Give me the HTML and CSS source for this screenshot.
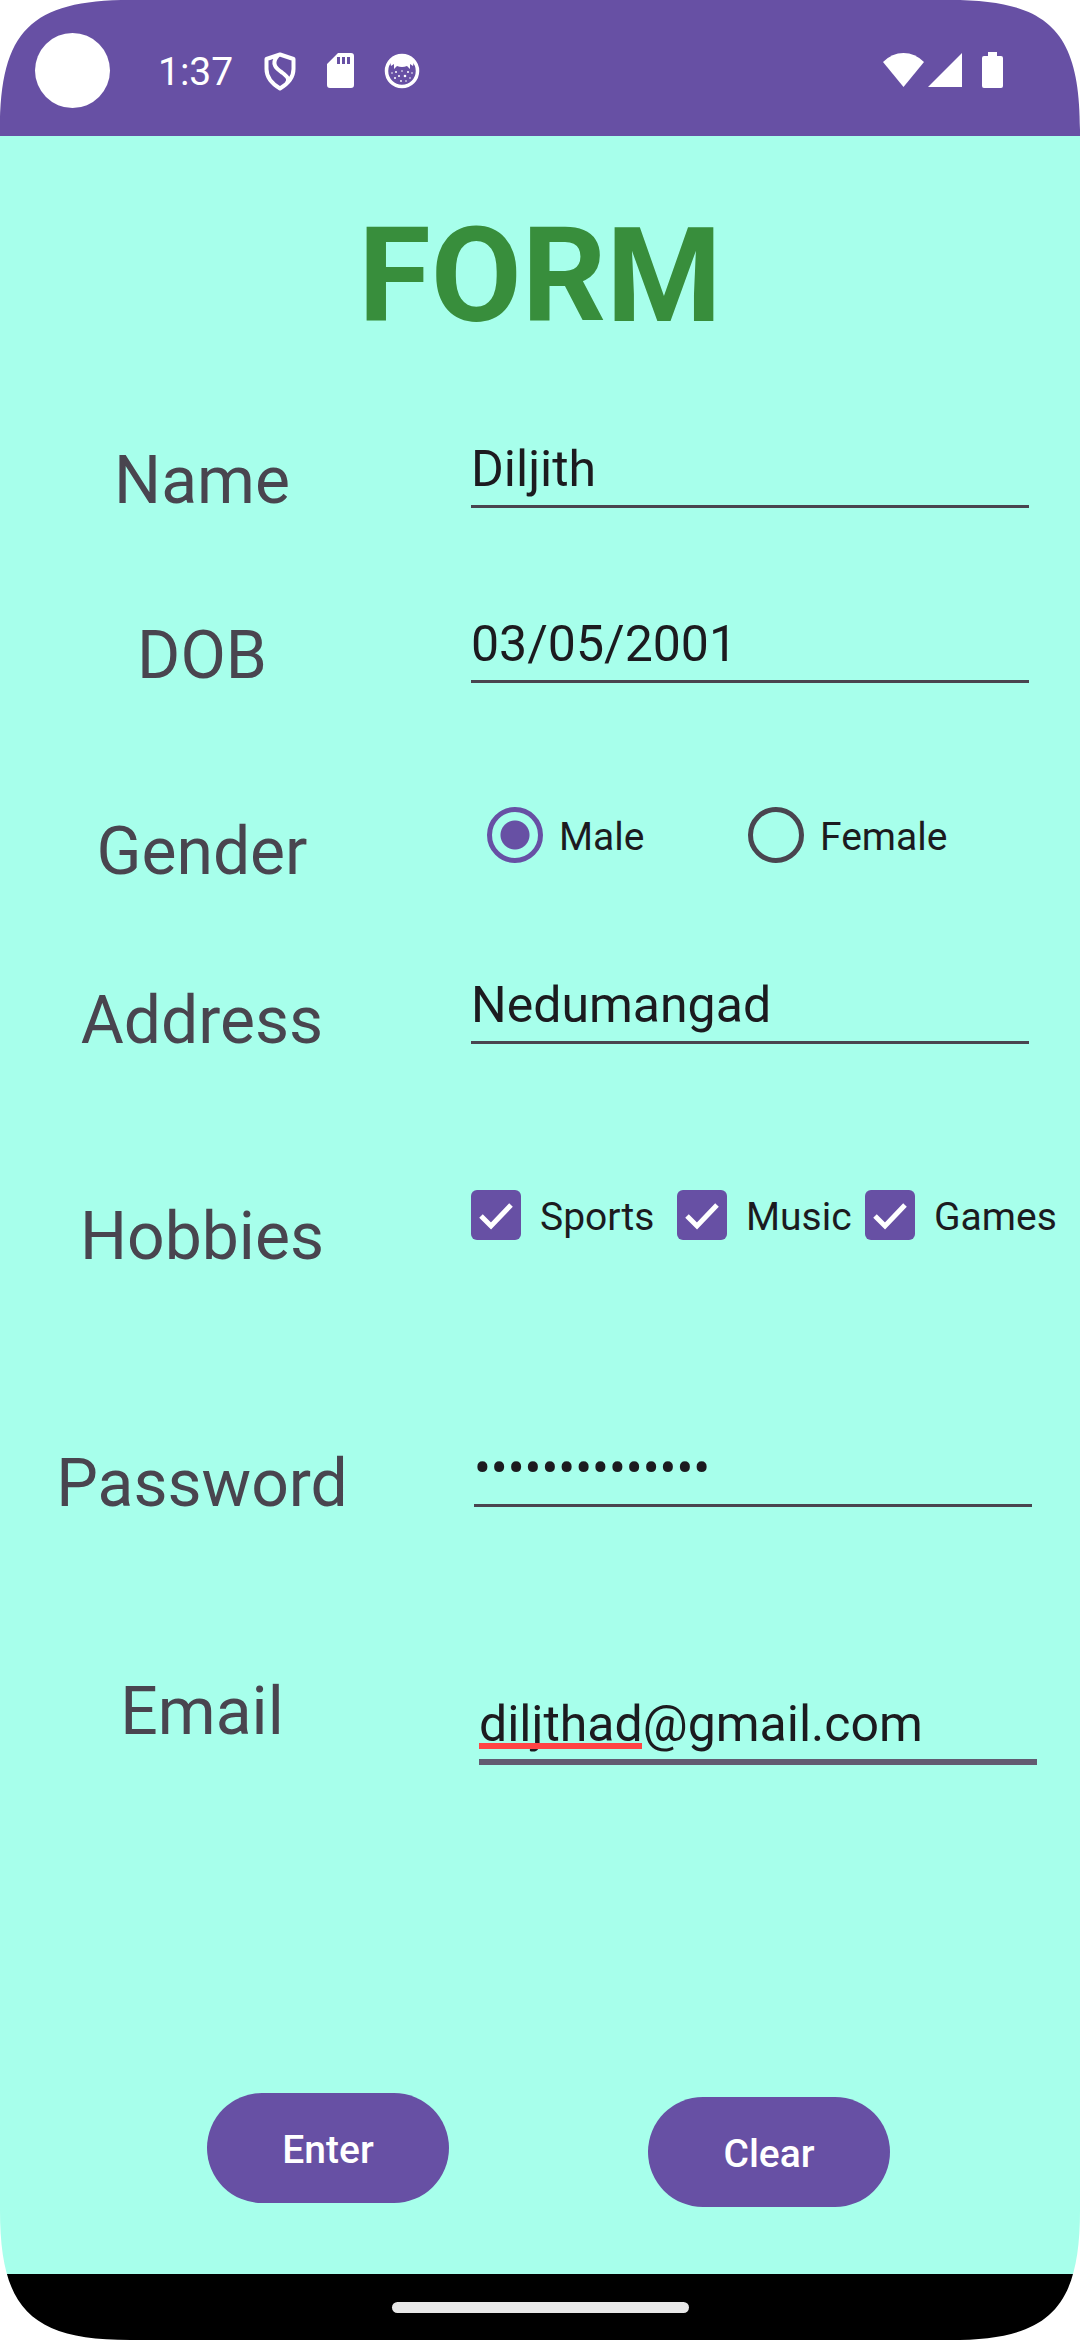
FILE: index.html
```html
<!DOCTYPE html>
<html lang="en">
<head>
<meta charset="utf-8">
<meta name="viewport" content="width=device-width, initial-scale=1">
<title>Form</title>
<link rel="stylesheet" href="styles.css">
</head>
<body>
<div class="screen">
  <header class="status-bar">
    <span class="camera"></span>
    <span class="clock">1:37</span>
    <div class="notifications">
      <svg class="icon" viewBox="0 0 40 40" aria-hidden="true"><path d="M20 3.500L33.500 8V18C33.500 26.500 27.500 33 20 37.500C12.500 33 6.500 26.500 6.500 18V8ZM18 4.500C10 13 17 18 22 21.500C28 26 30 29 26.500 32" fill="none" stroke="#fff" stroke-width="4" stroke-linejoin="round"/></svg>
      <svg class="icon" viewBox="0 0 40 40" aria-hidden="true"><path fill="#fff" fill-rule="evenodd" d="M17 2H30Q33 2 33 5V34Q33 37 30 37H9Q6 37 6 34V13ZM16 6V13H19V6ZM21 6V13H24V6ZM26 6V13H29V6Z"/></svg>
      <svg class="icon" viewBox="0 0 40 40" aria-hidden="true"><circle cx="20" cy="20" r="15.500" fill="none" stroke="#fff" stroke-width="3.500"/><path fill="#fff" d="M8 10Q20 -1 32 10L31 15L28 13L28 18L25 15Q20 17 15 15L12 18L12 13L9 15Z"/><g fill="#fff"><circle cx="14" cy="21" r="1"/><circle cx="20" cy="20" r="0.800"/><circle cx="26" cy="21" r="1"/><circle cx="10" cy="22" r="0.800"/><circle cx="30" cy="22" r="0.800"/><circle cx="17" cy="25" r="1"/><circle cx="23" cy="25" r="1.300"/><circle cx="13" cy="27" r="1"/><circle cx="28" cy="27" r="0.800"/><circle cx="19" cy="30" r="0.900"/><circle cx="24" cy="30" r="0.800"/></g></svg>
    </div>
    <div class="system">
      <svg class="wifi" viewBox="0 0 41 36" aria-hidden="true"><path fill="#fff" d="M0 10Q9 1 20.500 1T41 10L20.500 35Z"/></svg>
      <svg class="signal" viewBox="0 0 34 36" aria-hidden="true"><path fill="#fff" d="M34 1V35H0Z"/></svg>
      <svg class="battery" viewBox="0 0 21 36" aria-hidden="true"><path fill="#fff" d="M6 0H15V4H19Q21 4 21 6V34Q21 36 19 36H2Q0 36 0 34V6Q0 4 2 4H6Z"/></svg>
    </div>
  </header>

  <main class="content">
    <h1 class="title">FORM</h1>
    <form class="form">
      <div class="row">
        <label class="label" for="name">Name</label>
        <input class="input" id="name" type="text" value="Diljith">
      </div>
      <div class="row row-dob">
        <label class="label" for="dob">DOB</label>
        <input class="input" id="dob" type="text" value="03/05/2001">
      </div>
      <div class="row row-gender" role="radiogroup" aria-labelledby="gender">
        <span class="label" id="gender">Gender</span>
        <div class="radios">
          <label class="option"><input class="radio" type="radio" name="gender" checked><span class="option-text">Male</span></label>
          <label class="option"><input class="radio" type="radio" name="gender"><span class="option-text">Female</span></label>
        </div>
      </div>
      <div class="row row-low row-address">
        <label class="label" for="address">Address</label>
        <input class="input" id="address" type="text" value="Nedumangad">
      </div>
      <div class="row row-hobbies" role="group" aria-labelledby="hobbies">
        <span class="label" id="hobbies">Hobbies</span>
        <div class="checks">
          <label class="option"><input class="check" type="checkbox" checked><span class="option-text">Sports</span></label>
          <label class="option"><input class="check" type="checkbox" checked><span class="option-text">Music</span></label>
          <label class="option"><input class="check" type="checkbox" checked><span class="option-text">Games</span></label>
        </div>
      </div>
      <div class="row row-low row-password">
        <label class="label" for="password">Password</label>
        <input class="input" id="password" type="password" value="abcdefghijklmn">
      </div>
      <div class="row row-low row-email">
        <label class="label" for="email">Email</label>
        <div class="spellchecked">
          <input class="input input-focused" id="email" type="text" inputmode="email" spellcheck="false" value="diljthad@gmail.com">
          <span class="typo"></span>
        </div>
      </div>
      <div class="actions">
        <button class="button" type="button">Enter</button>
        <button class="button button-clear" type="reset">Clear</button>
      </div>
    </form>
  </main>

  <footer class="nav-bar"><span class="handle"></span></footer>

  <svg class="corner corner-tl" viewBox="0 0 130 130" aria-hidden="true"><path d="M0 0H130C31 0 0 31 0 130Z"/></svg>
  <svg class="corner corner-tr" viewBox="0 0 130 130" aria-hidden="true"><path d="M0 0H130C31 0 0 31 0 130Z"/></svg>
  <svg class="corner corner-bl" viewBox="0 0 130 130" aria-hidden="true"><path d="M0 0H130C31 0 0 31 0 130Z"/></svg>
  <svg class="corner corner-br" viewBox="0 0 130 130" aria-hidden="true"><path d="M0 0H130C31 0 0 31 0 130Z"/></svg>
</div>
</body>
</html>
```
FILE: styles.css
```css
:root {
  --primary: #6750a4;
  --surface: #a7ffeb;
  --text: #1c1b1f;
  --muted: #49454f;
}

* {
  box-sizing: border-box;
}

body {
  margin: 0;
  background: #fff;
  color: var(--text);
  font-family: Roboto, "Liberation Sans", sans-serif;
}

.screen {
  position: relative;
  display: flex;
  flex-direction: column;
  min-height: 100vh;
}

/* Status bar */
.status-bar {
  display: flex;
  align-items: center;
  height: 136px;
  padding: 4px 77px 0 35px;
  background: var(--primary);
  color: #fff;
}

.camera {
  width: 75px;
  height: 75px;
  border-radius: 50%;
  background: #fff;
}

.clock {
  margin-left: 48px;
  padding-top: 4px;
  font-size: 39px;
  line-height: 46px;
}

.notifications {
  display: flex;
  gap: 21px;
  margin-left: 27px;
  padding-top: 2px;
}

.icon {
  width: 40px;
  height: 40px;
}

.system {
  display: flex;
  margin-left: auto;
}

.wifi {
  width: 41px;
  height: 36px;
}

.signal {
  width: 34px;
  height: 36px;
  margin-left: 4px;
}

.battery {
  width: 21px;
  height: 36px;
  margin-left: 20px;
}

/* Form */
.content {
  flex: 1;
  background: var(--surface);
}

.title {
  margin: 62px 0 0;
  color: #388e3c;
  font-size: 132px;
  font-weight: 700;
  line-height: 156px;
  text-align: center;
}

.form {
  display: flex;
  flex-direction: column;
  padding-top: 70px;
}

.row {
  display: grid;
  grid-template-columns: 404px 1fr;
  column-gap: 67px;
  align-items: start;
  height: 100px;
  padding-right: 51px;
}

.row-dob {
  margin-top: 75px;
}

.row-gender {
  margin-top: 96px;
}

.row-address {
  margin-top: 65px;
}

.row-hobbies {
  margin-top: 120px;
  padding-right: 0;
}

.row-password {
  column-gap: 70px;
  margin-top: 143px;
  padding-right: 48px;
}

.row-email {
  column-gap: 75px;
  margin-top: 128px;
  padding-right: 43px;
}

.label {
  padding-top: 18px;
  color: var(--muted);
  font-size: 66px;
  line-height: 78px;
  text-align: center;
}

.row-low .label {
  padding-top: 22px;
}

.input {
  display: block;
  width: 100%;
  height: 84px;
  padding: 8px 0 0;
  border: 0;
  border-bottom: 3px solid var(--muted);
  border-radius: 0;
  outline: 0;
  background: transparent;
  color: var(--text);
  font-family: inherit;
  font-size: 50px;
  line-height: 60px;
}

.input-focused {
  border-bottom: 6px solid #625b71;
}

.spellchecked {
  position: relative;
  margin-top: 30px;
}

.typo {
  position: absolute;
  bottom: 16px;
  left: 0;
  width: 163px;
  height: 6px;
  background: #ff4444;
}

.radios,
.checks {
  display: flex;
}

.option {
  display: flex;
  align-items: center;
  font-size: 39px;
  line-height: 46px;
}

.option-text {
  padding-top: 4px;
}

.radios {
  padding: 12px 0 0 16px;
}

.radios .option {
  flex: 0 0 261px;
}

.checks {
  padding-top: 10px;
}

.checks .option {
  flex: 0 0 206px;
}

.checks .option + .option {
  flex-basis: 188px;
}

.radio {
  appearance: none;
  width: 56px;
  height: 56px;
  margin: 0 16px 0 0;
  border: 5px solid var(--muted);
  border-radius: 50%;
}

.radio:checked {
  border-color: var(--primary);
  background: radial-gradient(circle, var(--primary) 14px, transparent 15px);
}

.check {
  appearance: none;
  width: 50px;
  height: 50px;
  margin: 0 19px 0 0;
  border-radius: 6px;
  background: var(--primary) url("data:image/svg+xml,%3Csvg xmlns='http://www.w3.org/2000/svg' viewBox='0 0 50 50'%3E%3Cpath d='M10 26L20 36L40 15' fill='none' stroke='white' stroke-width='5'/%3E%3C/svg%3E");
}

.actions {
  display: flex;
  gap: 199px;
  padding: 342px 0 0 207px;
}

.button {
  width: 242px;
  height: 110px;
  padding: 4px 0 0;
  border: 0;
  border-radius: 55px;
  background: var(--primary);
  color: #fff;
  font-family: inherit;
  font-size: 39px;
  font-weight: 500;
}

.button-clear {
  margin-top: 4px;
}

/* Navigation bar */
.nav-bar {
  display: flex;
  align-items: center;
  justify-content: center;
  height: 66px;
  background: #000;
}

.handle {
  width: 297px;
  height: 11px;
  border-radius: 6px;
  background: #e8e8e8;
}

/* Rounded display corners */
.corner {
  position: absolute;
  width: 130px;
  height: 130px;
  fill: #fff;
}

.corner-tl {
  top: 0;
  left: 0;
}

.corner-tr {
  top: 0;
  right: 0;
  transform: scaleX(-1);
}

.corner-bl {
  bottom: 0;
  left: 0;
  transform: scaleY(-1);
}

.corner-br {
  right: 0;
  bottom: 0;
  transform: scale(-1);
}
```
